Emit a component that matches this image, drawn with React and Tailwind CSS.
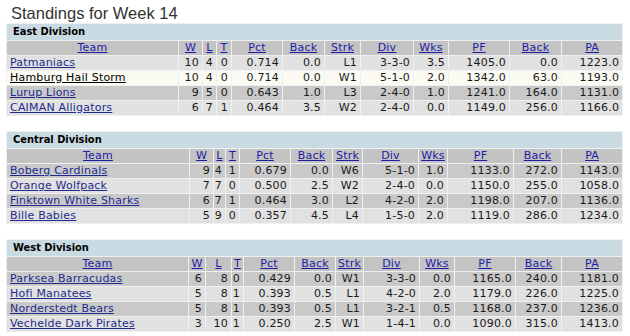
import React from "react";

const headers = ["Team", "W", "L", "T", "Pct", "Back", "Strk", "Div", "Wks", "PF", "Back", "PA"];

const divisions = [
  {
    name: "East Division",
    cols: ["w-[171px]", "w-[23px]", "w-[13px]", "w-[14px]", "w-[50px]", "w-[41px]", "w-[35px]", "w-[52px]", "w-[34px]", "w-[60px]", "w-[51px]", "w-[60px]"],
    rows: [
      ["l", "Patmaniacs", "10", "4", "0", "0.714", "0.0", "L1", "3-3-0", "3.5", "1405.0", "0.0", "1223.0"],
      ["h", "Hamburg Hail Storm", "10", "4", "0", "0.714", "0.0", "W1", "5-1-0", "2.0", "1342.0", "63.0", "1193.0"],
      ["d", "Lurup Lions", "9", "5", "0", "0.643", "1.0", "L3", "2-4-0", "1.0", "1241.0", "164.0", "1131.0"],
      ["l", "CAIMAN Alligators", "6", "7", "1", "0.464", "3.5", "W2", "2-4-0", "0.0", "1149.0", "256.0", "1166.0"],
    ],
  },
  {
    name: "Central Division",
    cols: ["w-[182px]", "w-[23px]", "w-[11px]", "w-[13px]", "w-[50px]", "w-[41px]", "w-[29px]", "w-[55px]", "w-[28px]", "w-[65px]", "w-[47px]", "w-[60px]"],
    rows: [
      ["d", "Boberg Cardinals", "9", "4", "1", "0.679", "0.0", "W6", "5-1-0", "1.0", "1133.0", "272.0", "1143.0"],
      ["l", "Orange Wolfpack", "7", "7", "0", "0.500", "2.5", "W2", "2-4-0", "0.0", "1150.0", "255.0", "1058.0"],
      ["d", "Finktown White Sharks", "6", "7", "1", "0.464", "3.0", "L2", "4-2-0", "2.0", "1198.0", "207.0", "1136.0"],
      ["l", "Bille Babies", "5", "9", "0", "0.357", "4.5", "L4", "1-5-0", "2.0", "1119.0", "286.0", "1234.0"],
    ],
  },
  {
    name: "West Division",
    cols: ["w-[181px]", "w-[16px]", "w-[25px]", "w-[11px]", "w-[50px]", "w-[40px]", "w-[27px]", "w-[55px]", "w-[34px]", "w-[60px]", "w-[45px]", "w-[60px]"],
    rows: [
      ["d", "Parksea Barracudas", "6", "8", "0", "0.429", "0.0", "W1", "3-3-0", "0.0", "1165.0", "240.0", "1181.0"],
      ["l", "Hofi Manatees", "5", "8", "1", "0.393", "0.5", "L1", "4-2-0", "2.0", "1179.0", "226.0", "1225.0"],
      ["d", "Norderstedt Bears", "5", "8", "1", "0.393", "0.5", "L1", "3-2-1", "0.5", "1168.0", "237.0", "1236.0"],
      ["l", "Vechelde Dark Pirates", "3", "10", "1", "0.250", "2.5", "W1", "1-4-1", "0.0", "1090.0", "315.0", "1413.0"],
    ],
  },
];

const rowBg = {
  d: "bg-[#c9c9c9]",
  l: "bg-[#e1e1e1]",
  h: "bg-[#fbfbf3]",
};

const DivisionTable = ({ division }) => (
  <table className="table-fixed border-separate border-spacing-px bg-[#f0f0f0] w-[617px] ml-[6px] text-[11px] leading-[14px] tracking-[0.2px] text-[#1a1a1a]">
    <colgroup>
      {division.cols.map((c, i) => (
        <col key={i} className={c} />
      ))}
    </colgroup>
    <tbody>
      <tr>
        <td colSpan={12} className="h-[16px] p-0 pl-[6px] bg-[#c9dae2] font-bold text-black tracking-normal font-['DejaVu_Sans_Condensed','DejaVu_Sans',sans-serif]">
          {division.name}
        </td>
      </tr>
      <tr>
        {headers.map((h, i) => (
          <td key={i} className="h-[14px] p-0 bg-[#c3c3c3] text-center whitespace-nowrap">
            <a href="#" className="text-[#1c1ca4] underline">{h}</a>
          </td>
        ))}
      </tr>
      {division.rows.map((r) => {
        const [kind, team, ...vals] = r;
        return (
          <tr key={team} className={rowBg[kind]}>
            <td className="h-[14px] p-0 pl-[3px] whitespace-nowrap">
              <a href="#" className={kind === "h" ? "text-black underline" : "text-[#1f2c8c] underline"}>{team}</a>
            </td>
            {vals.map((v, i) => (
              <td key={i} className="h-[14px] p-0 pr-[3px] text-right whitespace-nowrap">
                {v}
              </td>
            ))}
          </tr>
        );
      })}
    </tbody>
  </table>
);

export default function App() {
  return (
    <div className="w-[630px] h-[336px] bg-white overflow-hidden font-['DejaVu_Sans',sans-serif]">
      <div className="h-[23px] pt-[4px] pl-[11px] text-[16.5px] leading-[19px] text-[#333333] font-['Liberation_Sans',Arial,sans-serif]">
        Standings for Week 14
      </div>
      <div className="flex flex-col gap-[15px]">
        {divisions.map((d) => (
          <DivisionTable key={d.name} division={d} />
        ))}
      </div>
    </div>
  );
}
